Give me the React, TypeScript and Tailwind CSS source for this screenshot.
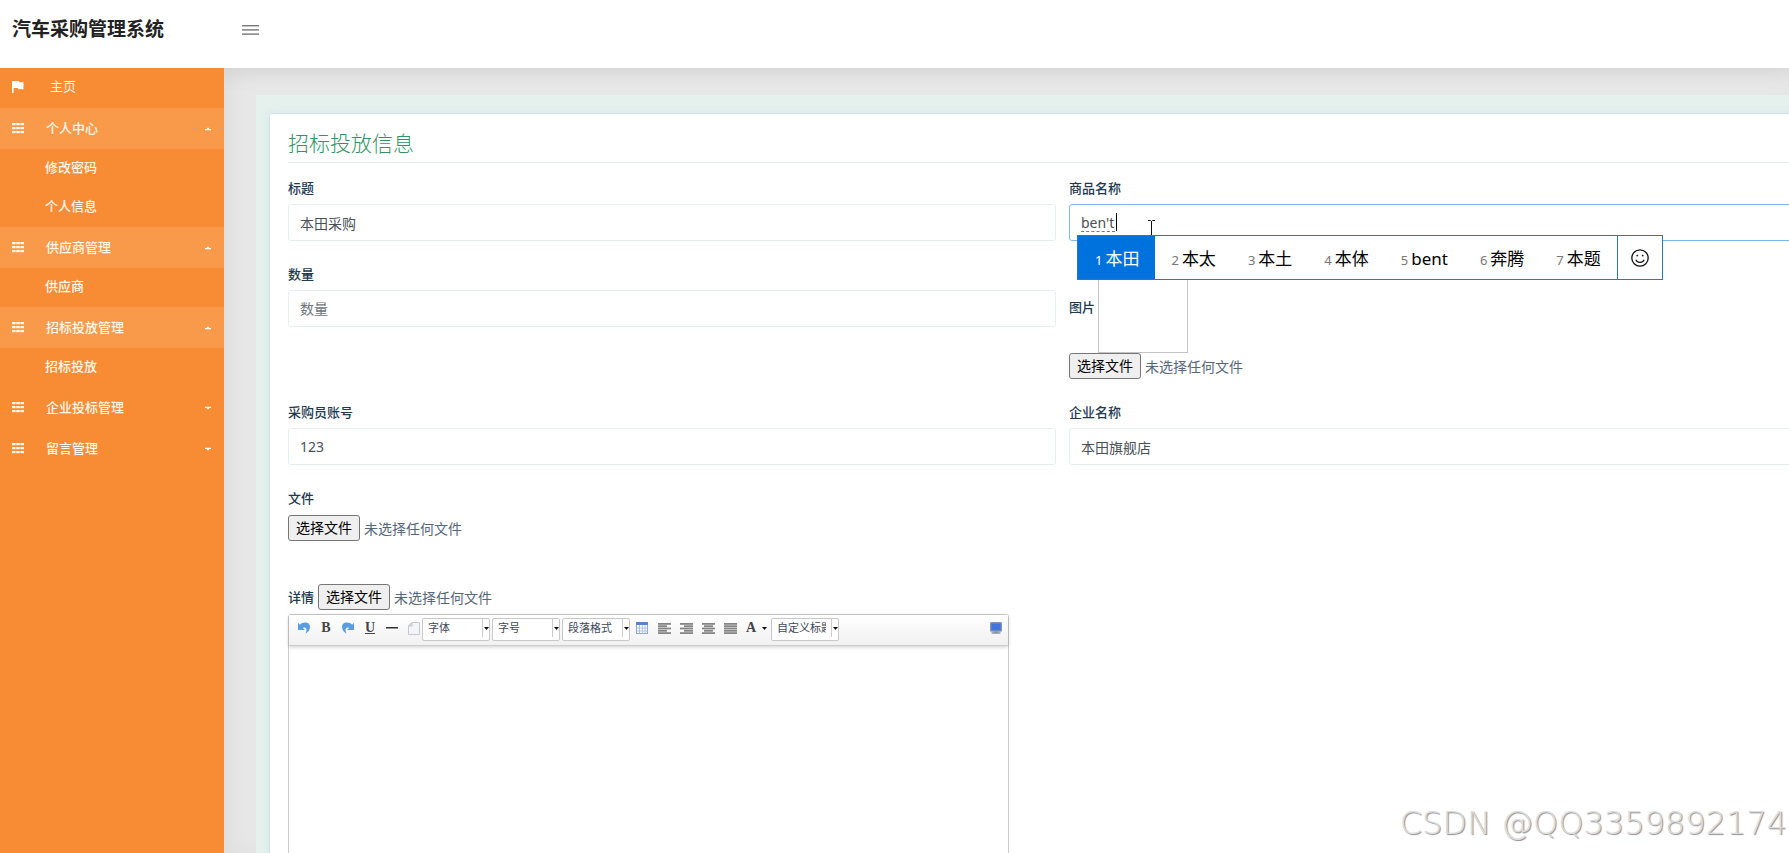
import { useRef, type ReactNode } from "react";

const sans = "font-['Noto_Sans','Noto_Sans_CJK_SC',sans-serif]";

function GridIcon() {
  return (
    <svg width="12" height="11" viewBox="0 0 12 11" fill="currentColor" aria-hidden="true">
      {[0, 4, 8].map((y) => (
        <g key={y}>
          <rect x="0" y={y} width="3.6" height="2.2" />
          <rect x="4.2" y={y} width="3.6" height="2.2" />
          <rect x="8.4" y={y} width="3.6" height="2.2" />
        </g>
      ))}
    </svg>
  );
}

function FlagIcon() {
  return (
    <svg width="12" height="12" viewBox="0 0 12 12" fill="#fff" aria-hidden="true">
      <path d="M0 0h7l.4 1.200H11.500V8.200H6.200L5.800 7H1.600V12H0z" />
    </svg>
  );
}

function Caret({ open }: { open: boolean }) {
  return (
    <svg width="6" height="4" viewBox="0 0 6 4" fill="#fff" aria-hidden="true">
      {open ? <path d="M0 3.200V2h1.600L2.400.8h1.200l.8 1.200H6v1.200z" /> : <path d="M0 .8V2h1.600l.8 1.200h1.200L4.400 2H6V.8z" />}
    </svg>
  );
}

const menu = [
  { label: "个人中心", open: true, items: ["修改密码", "个人信息"] },
  { label: "供应商管理", open: true, items: ["供应商"] },
  { label: "招标投放管理", open: true, items: ["招标投放"] },
  { label: "企业投标管理", open: false, items: [] },
  { label: "留言管理", open: false, items: [] },
];

function Sidebar() {
  return (
    <nav className="relative z-20 w-[224px] shrink-0 bg-[#f78c35] text-[13px] font-medium text-[#fff8ee]">
      <a href="#home" className="flex h-10 items-center pb-[2px] pl-3">
        <FlagIcon />
        <span className="pl-[26px] font-normal">主页</span>
      </a>
      {menu.map((group) => (
        <div key={group.label}>
          <button
            type="button"
            aria-expanded={group.open}
            className={`flex h-[41px] w-full items-center pr-[13px] pl-3 ${group.open ? "bg-[#f89a4a]" : ""}`}
          >
            <GridIcon />
            <span className="flex-1 pl-[22px] text-left">{group.label}</span>
            <Caret open={group.open} />
          </button>
          {group.items.map((item) => (
            <a key={item} href="#item" className="flex h-[39px] items-center pb-[2px] pl-[45px]">
              {item}
            </a>
          ))}
        </div>
      ))}
    </nav>
  );
}

function FieldLabel({ htmlFor, children }: { htmlFor: string; children: ReactNode }) {
  return (
    <label htmlFor={htmlFor} className="text-[13px] leading-[18px] font-medium text-[#22384f]">
      {children}
    </label>
  );
}

function TextField({ id, label, value, placeholder }: { id: string; label: string; value?: string; placeholder?: string }) {
  return (
    <div className="flex flex-col gap-[7px]">
      <FieldLabel htmlFor={id}>{label}</FieldLabel>
      <input
        id={id}
        defaultValue={value}
        placeholder={placeholder}
        className="h-[37px] w-full rounded-[3px] border border-[#e4eff0] bg-white px-[11px] text-[14px] text-[#495057] outline-none placeholder:text-[#6c757d]"
      />
    </div>
  );
}

function FilePicker({ id }: { id: string }) {
  const input = useRef<HTMLInputElement>(null);
  return (
    <div className="flex items-center gap-1 text-[14px] text-[#55677a]">
      <input ref={input} type="file" className="hidden" tabIndex={-1} />
      <button
        id={id}
        type="button"
        onClick={() => input.current?.click()}
        className="h-[26px] w-[72px] rounded-[3px] border border-[#767676] bg-[#efefef] leading-[22px] text-black"
      >
        选择文件
      </button>
      <span>未选择任何文件</span>
    </div>
  );
}

const candidates = ["本田", "本太", "本土", "本体", "bent", "奔腾", "本题"];

function CandidateBar() {
  return (
    <div className="absolute top-[31px] left-2 z-10 flex h-[45px] border border-[#2779c4] bg-white">
      {candidates.map((word, i) => (
        <button
          key={word}
          type="button"
          className={`flex items-baseline gap-[3px] px-4 pt-[10px] text-[17px] leading-[26px] last-of-type:pr-[17px] ${
            i === 0 ? "bg-[#0072de] pl-[17px] text-white" : "text-black"
          }`}
        >
          <span className={`text-[13px] ${i === 0 ? "text-white" : "text-[#777]"}`}>{i + 1}</span>
          <span>{word}</span>
        </button>
      ))}
      <button type="button" aria-label="表情" className="flex w-[45px] items-center justify-center border-l border-[#2779c4]">
        <svg width="18" height="18" viewBox="0 0 18 18" fill="none" stroke="#111" strokeWidth="1.3">
          <circle cx="9" cy="9" r="8.2" />
          <path d="M4.8 10.8c1.600 3.400 6.800 3.400 8.400 0" />
          <circle cx="6.3" cy="6.6" r=".9" fill="#111" stroke="none" />
          <circle cx="11.7" cy="6.6" r=".9" fill="#111" stroke="none" />
        </svg>
      </button>
    </div>
  );
}

function ProductField() {
  return (
    <div className="flex flex-col gap-[7px]">
      <FieldLabel htmlFor="product">商品名称</FieldLabel>
      <div className="relative">
        <input
          id="product"
          defaultValue="ben't"
          className="h-[37px] w-full rounded-[3px] border border-[#80b8ee] bg-white px-[11px] text-[14px] text-[#495057] outline-none"
        />
        <span className="absolute top-[27px] left-3 w-[34px] border-t border-dashed border-[#777]" />
        <span className="absolute top-[9px] left-[47px] h-[18px] w-px bg-black" />
        <CandidateBar />
        <svg className="absolute top-[15px] left-[78px] z-0" width="9" height="18" viewBox="0 0 9 18" fill="none" stroke="#111">
          <path d="M1 1.500h2.500l1 1 1-1H8M4.500 2v15" />
        </svg>
      </div>
    </div>
  );
}

function IconButton({ label, children }: { label: string; children: ReactNode }) {
  return (
    <button type="button" aria-label={label} className="flex size-4 items-center justify-center">
      {children}
    </button>
  );
}

function ToolSelect({ label }: { label: string }) {
  return (
    <div className="flex h-[23px] w-[68px] items-stretch rounded-[2px] border border-[#c8c8c8] bg-white">
      <select aria-label={label} className="mr-[5px] w-[54px] appearance-none overflow-hidden bg-transparent pb-[2px] pl-[5px] text-[11px] whitespace-nowrap text-[#3c4858] outline-none">
        <option>{label}</option>
      </select>
      <span className="mb-[3px] flex flex-1 items-center justify-center border-l border-[#ccc]">
        <DownArrow />
      </span>
    </div>
  );
}

function DownArrow() {
  return (
    <svg width="5" height="3" viewBox="0 0 5 3" fill="#111" aria-hidden="true">
      <path d="M0 0h5L2.500 3z" />
    </svg>
  );
}

function UndoIcon({ flip = false }: { flip?: boolean }) {
  return (
    <svg width="12" height="12" viewBox="0 0 12 12" className={flip ? "-scale-x-100" : ""} aria-hidden="true">
      <path d="M0 .8 1.900 2.700C4.500-.2 11.900-.6 12 5c0 2.900-2 5.300-4.800 6.800C8.500 9.600 8.800 7.800 8.200 6.700 7.500 5.400 6 5.300 4.900 6L6.900 8H0z" fill="#5a9de0" />
    </svg>
  );
}

function AlignIcon({ kind }: { kind: "left" | "right" | "center" | "justify" }) {
  const short = { left: [0, 9], right: [4, 9], center: [2, 9], justify: [0, 13] }[kind];
  return (
    <svg width="13" height="11" viewBox="0 0 13 11" fill="#858585" aria-hidden="true">
      {[0, 2.3, 4.6, 6.9, 9.2].map((y, i) => (
        <rect key={y} x={i % 2 ? short[0] : 0} y={y} width={i % 2 ? short[1] : 13} height="1.8" />
      ))}
    </svg>
  );
}

function Toolbar() {
  return (
    <div className="flex h-[31px] items-center border-b border-[#ccc] bg-linear-to-b from-white to-[#f1f1f1] pr-1 pb-1 pl-[7px] shadow-[0_1px_4px_rgba(0,0,0,0.2)]">
      <div className="flex items-center gap-[6px] font-['Liberation_Serif',serif] text-[14px] leading-4 text-[#444]">
        <IconButton label="撤销"><UndoIcon /></IconButton>
        <IconButton label="加粗"><b>B</b></IconButton>
        <IconButton label="重做"><UndoIcon flip /></IconButton>
        <IconButton label="下划线"><span className="font-bold underline">U</span></IconButton>
        <IconButton label="分隔线">
          <svg width="12" height="2"><rect width="12" height="1.500" fill="#333" /></svg>
        </IconButton>
        <IconButton label="清空文档">
          <svg width="12" height="13" viewBox="0 0 12 13">
            <path d="M.5 4 4 .5h7.500v12H.5z" fill="#f2f4f8" stroke="#c4c8d0" />
            <path d="M.5 4H4V.5z" fill="#d5d9df" stroke="#c4c8d0" />
          </svg>
        </IconButton>
      </div>
      <div className="flex gap-[2px] pt-[3px]">
        <ToolSelect label="字体" />
        <ToolSelect label="字号" />
        <ToolSelect label="段落格式" />
      </div>
      <div className="flex items-center gap-[6px] pl-1">
        <IconButton label="表格">
          <svg width="12" height="12" viewBox="0 0 12 12">
            <rect x=".5" y=".5" width="11" height="11" fill="#fff" stroke="#8fa8d8" />
            <rect width="12" height="3" fill="#5484d8" />
            <path d="M.5 6h11M.5 9h11M3.500 3v9M6.300 3v9M9 3v9" stroke="#9db4de" strokeWidth=".8" />
          </svg>
        </IconButton>
        <IconButton label="左对齐"><AlignIcon kind="left" /></IconButton>
        <IconButton label="右对齐"><AlignIcon kind="right" /></IconButton>
        <IconButton label="居中对齐"><AlignIcon kind="center" /></IconButton>
        <IconButton label="两端对齐"><AlignIcon kind="justify" /></IconButton>
      </div>
      <button type="button" aria-label="字体颜色" className="flex w-[33px] items-center justify-end gap-[6px] pr-1 font-['Liberation_Serif',serif] text-[14px] leading-4 font-bold text-[#444]">
        A
        <DownArrow />
      </button>
      <div className="pt-[3px]">
        <ToolSelect label="自定义标题" />
      </div>
      <div className="ml-auto">
        <IconButton label="全屏">
          <svg width="12" height="12" viewBox="0 0 12 12">
            <rect x=".7" y=".7" width="10.6" height="8.300" rx=".8" fill="#3f74dc" stroke="#8592aa" strokeWidth="1.4" />
            <path d="M4 9.500h4v.8h2.500v1.500h-9v-1.500H4z" fill="#8592aa" />
          </svg>
        </IconButton>
      </div>
    </div>
  );
}

export default function App() {
  return (
    <div className={`relative flex h-screen flex-col overflow-hidden bg-white ${sans}`}>
      <header className="z-10 flex h-[68px] shrink-0 items-start bg-white shadow-[0_2px_24px_rgba(0,0,0,0.08)]">
        <h1 className="w-[242px] pt-[15px] pl-3 text-[19px] leading-7 font-bold text-[#222]">汽车采购管理系统</h1>
        <button type="button" aria-label="切换菜单" className="mt-[25px]">
          <svg width="17" height="10" viewBox="0 0 17 10" fill="#777">
            <rect width="17" height="1.400" />
            <rect y="4.200" width="17" height="1.400" />
            <rect y="8.400" width="17" height="1.400" />
          </svg>
        </button>
      </header>
      <div className="flex min-h-0 flex-1">
        <Sidebar />
        <main className="min-w-0 flex-1 overflow-hidden bg-[#e7e7e7] pt-[27px] pl-8 shadow-[inset_8px_0_20px_rgba(0,0,0,0.04)]">
          <div className="-mr-20 bg-[#e4f1ed] pt-[18px] pr-[14px] pl-[13px]">
            <form className="rounded-[3px] border border-[#d3e3ea] bg-white pt-[13px] pr-[17px] pb-8 pl-[18px] shadow-[0_0_8px_rgba(120,150,170,0.12)]">
              <h2 className="border-b border-[#e6ecec] pb-[3px] text-[21px] leading-8 font-light text-[#2f9465]">招标投放信息</h2>
              <div className="grid grid-cols-2 gap-x-[13px] gap-y-6 pt-4">
                <TextField id="title" label="标题" value="本田采购" />
                <ProductField />
                <TextField id="amount" label="数量" placeholder="数量" />
                <div>
                  <div className="flex h-[88px] items-center gap-[3px]">
                    <div className="pb-[6px]">
                      <FieldLabel htmlFor="photo">图片</FieldLabel>
                    </div>
                    <div className="h-[88px] w-[90px] border border-[#c4c4c4]" />
                  </div>
                  <FilePicker id="photo" />
                </div>
                <TextField id="buyer" label="采购员账号" value="123" />
                <TextField id="company" label="企业名称" value="本田旗舰店" />
                <div className="flex flex-col gap-2 pb-[19px]">
                  <FieldLabel htmlFor="attachment">文件</FieldLabel>
                  <FilePicker id="attachment" />
                </div>
                <div className="col-start-1">
                  <div className="flex items-center gap-1 pb-1">
                    <FieldLabel htmlFor="detail-file">详情</FieldLabel>
                    <FilePicker id="detail-file" />
                  </div>
                  <div className="max-w-[721px] rounded-[3px] border border-[#ccc]">
                    <Toolbar />
                    <textarea aria-label="详情" className="block h-[500px] w-full resize-none p-2 text-[14px] outline-none" />
                  </div>
                </div>
              </div>
            </form>
          </div>
        </main>
      </div>
      <div className="pointer-events-none absolute right-[2px] bottom-[10px] z-20 font-['DejaVu_Sans',sans-serif] text-[32px] leading-10 font-extralight text-[#dcdcdc] [text-shadow:1px_1px_1px_#8c8c8c]">
        CSDN @QQ3359892174
      </div>
    </div>
  );
}
